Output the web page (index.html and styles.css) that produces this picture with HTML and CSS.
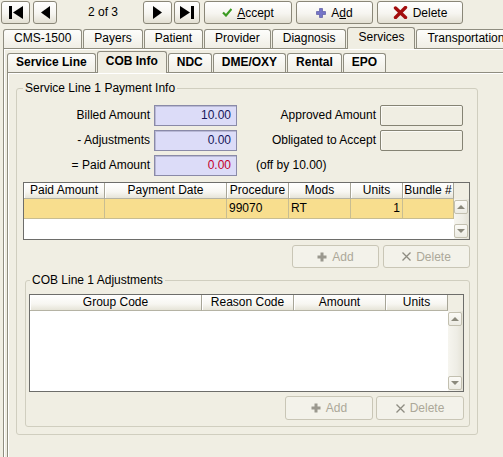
FILE: index.html
```html
<!DOCTYPE html>
<html lang="en">
<head>
    <meta charset="UTF-8">
    <title>Claim - Services - COB Info</title>
    <link rel="stylesheet" href="styles.css">
</head>
<body>
    <div class="toolbar">
        <button class="btn nav first" title="First">
            <svg width="14" height="13" viewBox="0 0 14 13"><rect x="0" y="0" width="3" height="13"/><path d="M14 0 L4 6.5 L14 13Z"/></svg>
        </button>
        <button class="btn nav prev" title="Previous">
            <svg width="9" height="13" viewBox="0 0 9 13"><path d="M9 0 L0 6.5 L9 13Z"/></svg>
        </button>
        <span class="counter">2 of 3</span>
        <button class="btn nav next" title="Next">
            <svg width="9" height="13" viewBox="0 0 9 13"><path d="M0 0 L9 6.5 L0 13Z"/></svg>
        </button>
        <button class="btn nav last" title="Last">
            <svg width="14" height="13" viewBox="0 0 14 13"><path d="M0 0 L10 6.5 L0 13Z"/><rect x="11" y="0" width="3" height="13"/></svg>
        </button>
        <button class="btn action accept">
            <svg width="10" height="9" viewBox="0 0 10 9"><path d="M1 4.5 L4 7.5 L9.5 1" fill="none" stroke="#3b9a22" stroke-width="2.2"/></svg>
            <span><u>A</u>ccept</span>
        </button>
        <button class="btn action add">
            <svg width="10" height="10" viewBox="0 0 10 10"><path d="M3.5 0.5h3v3h3v3h-3v3h-3v-3h-3v-3h3z" fill="#7474c8" stroke="#4c4c98" stroke-width="0.6"/></svg>
            <span>A<u>d</u>d</span>
        </button>
        <button class="btn action delete">
            <svg width="15" height="13" viewBox="0 0 15 13"><path d="M2.5 2 L12.5 11.5 M12.5 1.5 L2.5 11.5" stroke="#a30d0d" stroke-width="3.4" stroke-linecap="round"/></svg>
            <span>Delete</span>
        </button>
    </div>

    <div class="tabs main-tabs">
        <div class="tab">CMS-1500</div>
        <div class="tab">Payers</div>
        <div class="tab">Patient</div>
        <div class="tab">Provider</div>
        <div class="tab">Diagnosis</div>
        <div class="tab selected">Services</div>
        <div class="tab">Transportation</div>
    </div>

    <div class="panel outer">
        <div class="tabs sub-tabs">
            <div class="tab">Service Line</div>
            <div class="tab selected">COB Info</div>
            <div class="tab">NDC</div>
            <div class="tab">DME/OXY</div>
            <div class="tab">Rental</div>
            <div class="tab">EPO</div>
        </div>

        <div class="panel inner">
            <fieldset class="group payment">
                <legend>Service Line 1 Payment Info</legend>

                <div class="amounts">
                    <label>Billed Amount</label>
                    <div class="field money">10.00</div>
                    <label>Approved Amount</label>
                    <div class="field plain"></div>

                    <label>- Adjustments</label>
                    <div class="field money">0.00</div>
                    <label>Obligated to Accept</label>
                    <div class="field plain"></div>

                    <label>= Paid Amount</label>
                    <div class="field money negative">0.00</div>
                    <span class="note">(off by 10.00)</span>
                </div>

                <div class="grid lines-grid">
                    <div class="grid-body">
                        <div class="grid-head">
                            <div>Paid Amount</div>
                            <div>Payment Date</div>
                            <div>Procedure</div>
                            <div>Mods</div>
                            <div>Units</div>
                            <div>Bundle #</div>
                        </div>
                        <div class="grid-row selected">
                            <div></div>
                            <div></div>
                            <div>99070</div>
                            <div>RT</div>
                            <div class="num">1</div>
                            <div></div>
                        </div>
                    </div>
                    <div class="vscroll">
                        <div class="corner"></div>
                        <div class="track">
                            <div class="arrow up"></div>
                            <div class="arrow down"></div>
                        </div>
                    </div>
                </div>

                <div class="row-buttons">
                    <button class="btn-off">
                        <svg width="10" height="10" viewBox="0 0 10 10"><path d="M3.5 0.5h3v3h3v3h-3v3h-3v-3h-3v-3h3z" fill="#9a988e"/></svg>
                        <span>Add</span>
                    </button>
                    <button class="btn-off">
                        <svg width="9" height="9" viewBox="0 0 9 9"><path d="M0.5 0.5 L8.5 8.5 M8.5 0.5 L0.5 8.5" stroke="#8e8c82" stroke-width="1.3"/></svg>
                        <span>Delete</span>
                    </button>
                </div>

                <fieldset class="group adjustments">
                    <legend>COB Line 1 Adjustments</legend>

                    <div class="grid adj-grid">
                        <div class="grid-body">
                            <div class="grid-head">
                                <div>Group Code</div>
                                <div>Reason Code</div>
                                <div>Amount</div>
                                <div>Units</div>
                            </div>
                        </div>
                        <div class="vscroll">
                            <div class="corner"></div>
                            <div class="track">
                                <div class="arrow up"></div>
                                <div class="arrow down"></div>
                            </div>
                        </div>
                    </div>

                    <div class="row-buttons tall">
                        <button class="btn-off">
                            <svg width="10" height="10" viewBox="0 0 10 10"><path d="M3.5 0.5h3v3h3v3h-3v3h-3v-3h-3v-3h3z" fill="#9a988e"/></svg>
                            <span>Add</span>
                        </button>
                        <button class="btn-off">
                            <svg width="9" height="9" viewBox="0 0 9 9"><path d="M0.5 0.5 L8.5 8.5 M8.5 0.5 L0.5 8.5" stroke="#8e8c82" stroke-width="1.3"/></svg>
                            <span>Delete</span>
                        </button>
                    </div>
                </fieldset>
            </fieldset>
        </div>
    </div>
</body>
</html>
```

FILE: styles.css
```css
:root {
    --page: #f0eee3;
    --tab-border: #8f8d80;
    --group-border: #d0cebf;
    --grid-border: #6d6d6a;
    --row-yellow: #f8de8e;
    --row-line: #c8bd92;
    --money-bg: #dcdcf8;
}

* {
    box-sizing: border-box;
}

html, body {
    height: 100%;
    overflow: hidden;
}

body {
    display: flex;
    flex-direction: column;
    margin: 0;
    background: var(--page);
    color: #000;
    font: 12px "Liberation Sans", Arial, sans-serif;
}

/* toolbar */

.toolbar {
    display: flex;
    align-items: flex-start;
    flex-shrink: 0;
    height: 27px;
    padding: 1px 0 0 1px;
}

.btn {
    display: flex;
    align-items: center;
    justify-content: center;
    gap: 5px;
    height: 23px;
    padding: 0;
    border: 1px solid #8a8778;
    border-radius: 3px;
    background: linear-gradient(#ffffff, #f6f5f0 55%, #e3e0d3);
    color: #000;
    font: inherit;
}

.nav svg {
    fill: #000;
}

.first { width: 29px; }
.prev { width: 24px; margin-left: 3px; }
.next { width: 29px; }
.last { width: 26px; margin-left: 2px; }

.counter {
    width: 86px;
    padding-left: 6px;
    line-height: 23px;
    text-align: center;
}

.accept { width: 88px; margin-left: 4px; }
.add { width: 77px; margin-left: 4px; }
.delete { width: 86px; margin-left: 4px; }

/* tabs */

.tabs {
    display: flex;
    align-items: flex-end;
    flex-shrink: 0;
    gap: 1px;
    white-space: nowrap;
    overflow: hidden;
}

.main-tabs {
    height: 22px;
    padding-left: 3px;
}

.sub-tabs {
    height: 22px;
}

.tab {
    flex-shrink: 0;
    height: 20px;
    padding: 0 10px;
    border: 1px solid var(--tab-border);
    border-bottom: none;
    border-radius: 3px 3px 0 0;
    line-height: 17px;
    background: linear-gradient(#fdfdfb, #efede4);
}

.tab.selected {
    height: 22px;
    line-height: 19px;
    background: var(--page);
    position: relative;
    z-index: 1;
}

.sub-tabs .tab {
    padding: 0 8px;
    font-weight: bold;
}

.panel {
    display: flex;
    flex-direction: column;
    border-top: 1px solid var(--tab-border);
    border-left: 1px solid var(--tab-border);
    box-shadow: inset 1px 1px #fff;
}

.panel.outer {
    flex: 1;
    min-height: 0;
    margin: -1px 0 0 3px;
    padding: 0 0 0 3px;
}

.panel.outer > .sub-tabs {
    margin-top: 2px;
}

.panel.inner {
    flex: 1;
    min-height: 0;
    margin-top: -1px;
    padding: 8px 0 0 8px;
}

/* group boxes */

fieldset.group {
    margin: 0;
    padding: 0;
    min-width: 0;
    border: 1px solid var(--group-border);
    border-radius: 3px;
}

fieldset.group legend {
    padding: 0 2px;
    line-height: 14px;
}

.payment {
    width: 462px;
}

.payment > legend {
    margin-left: 6px;
}

.adjustments {
    margin: 5px 7px 7px 8px !important;
    padding-bottom: 6px !important;
}

.adjustments > legend {
    margin-left: 4px;
}

/* amount fields */

.amounts {
    display: grid;
    grid-template-columns: 133px 83px 135px 83px;
    grid-auto-rows: 21px;
    column-gap: 4px;
    row-gap: 4px;
    margin-top: 10px;
}

.amounts label {
    line-height: 21px;
    text-align: right;
    white-space: nowrap;
}

.field {
    height: 21px;
    padding: 0 5px;
    line-height: 19px;
    text-align: right;
}

.field.money {
    background: var(--money-bg);
    border: 1px solid #8a8aa8;
    box-shadow: inset 1px 1px #b9b9d6;
    color: #16165a;
}

.field.money.negative {
    color: #c4002c;
}

.field.plain {
    border: 1px solid #858374;
    border-radius: 2px;
    box-shadow: inset 1px 1px #fbfaf6;
}

.note {
    grid-column: 3 / span 2;
    padding-left: 15px;
    line-height: 21px;
}

/* grids */

.grid {
    display: flex;
    border: 1px solid var(--grid-border);
    background: #fff;
}

.grid-body {
    flex: 1;
}

.grid-head,
.grid-row {
    display: grid;
}

.grid-head > div {
    height: 16px;
    line-height: 15px;
    text-align: center;
    white-space: nowrap;
    border-right: 1px solid #a7a597;
    border-bottom: 1px solid #b5b3a4;
    background: linear-gradient(#ffffff, #f7f6f1 60%, #e6e4d8);
    box-shadow: inset 1px 0 #fff;
}

.grid-row > div {
    height: 20px;
    padding: 0 2px;
    line-height: 19px;
    border-right: 1px solid var(--row-line);
    border-bottom: 1px solid var(--row-line);
}

.grid-row.selected {
    background: var(--row-yellow);
}

.grid-row .num {
    text-align: right;
}

.lines-grid {
    width: 447px;
    height: 58px;
    margin: 6px 0 0 6px;
}

.lines-grid .grid-head,
.lines-grid .grid-row {
    grid-template-columns: 81px 122px 62px 62px 52px 51px;
}

.adj-grid {
    width: 435px;
    height: 98px;
    margin: 7px 0 0 3px;
}

.adj-grid .grid-head {
    grid-template-columns: 172px 92px 92px 62px;
}

/* vertical scroll bar */

.vscroll {
    display: flex;
    flex-direction: column;
    width: 15px;
}

.vscroll .corner {
    height: 16px;
    background: var(--page);
}

.track {
    flex: 1;
    display: flex;
    flex-direction: column;
    justify-content: space-between;
    padding: 1px 0;
    background: linear-gradient(to right, #f6f5ef, #eeede5 60%, #e4e2d6);
}

.arrow {
    height: 14px;
    margin: 0 1px 0 0;
    border: 1px solid #c3c0b0;
    border-radius: 2px;
    background: linear-gradient(#fbfaf6, #ecebe3);
    display: flex;
    align-items: center;
    justify-content: center;
}

.arrow::after {
    content: "";
    border-left: 4px solid transparent;
    border-right: 4px solid transparent;
}

.arrow.up::after {
    border-bottom: 4px solid #8b897c;
}

.arrow.down::after {
    border-top: 4px solid #8b897c;
}

/* disabled buttons */

.row-buttons {
    display: flex;
    justify-content: flex-end;
    gap: 4px;
    margin: 5px 7px 0 0;
}

.row-buttons.tall {
    gap: 3px;
    margin: 4px 5px 0 0;
}

.btn-off {
    display: flex;
    align-items: center;
    justify-content: center;
    gap: 5px;
    width: 87px;
    height: 23px;
    padding: 0;
    border: 1px solid #c9c6b6;
    border-radius: 3px;
    background: #f3f2ea;
    color: #aca899;
    font: inherit;
}

.row-buttons.tall .btn-off {
    width: 88px;
    height: 24px;
}
```
